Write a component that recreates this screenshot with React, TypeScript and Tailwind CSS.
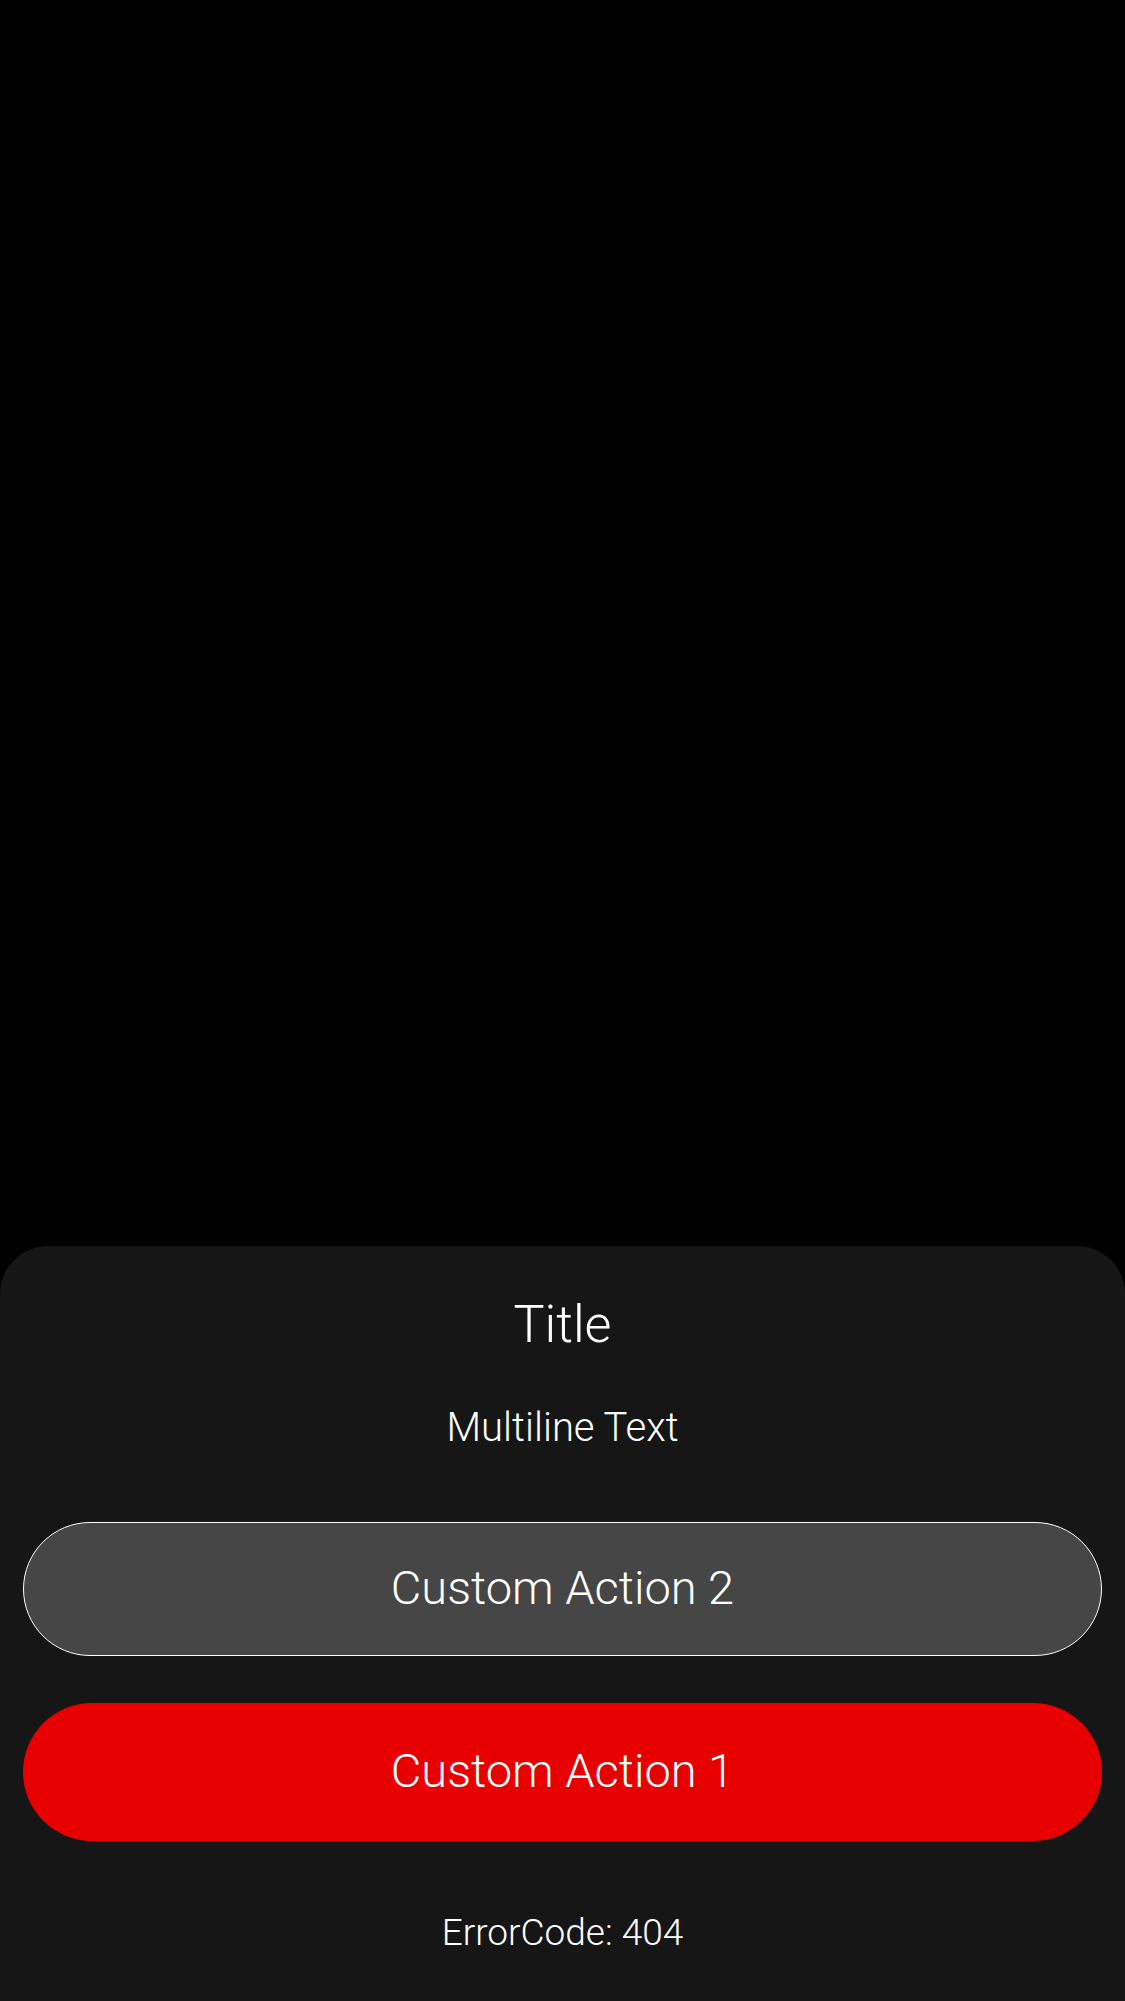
export default function App() {
  return (
    <div className="h-[2001px] w-full bg-black flex flex-col justify-end font-['Roboto','Liberation_Sans',Arial,sans-serif] font-light text-white">
      {/* Bottom sheet */}
      <div className="bg-[#161616] rounded-t-[48px] pt-[53px] pb-[50px] flex flex-col items-center">
        <div className="text-[52px] leading-[52px]">Title</div>
        <div className="mt-[57px] text-[40px] leading-[40px]">Multiline Text</div>

        <div className="mt-[74px] w-full px-[23px] flex flex-col">
          <button className="h-[134px] w-full rounded-full border-[1.5px] border-white bg-[#464646] pb-[4px] text-[47px] leading-none font-light text-white">
            Custom Action 2
          </button>
          <button className="mt-[47px] h-[138px] w-full rounded-full bg-[#e80000] pb-[4px] text-[47px] leading-none font-light text-white">
            Custom Action 1
          </button>
        </div>

        <div className="mt-[74px] text-[37px] leading-[36px]">ErrorCode: 404</div>
      </div>
    </div>
  )
}
